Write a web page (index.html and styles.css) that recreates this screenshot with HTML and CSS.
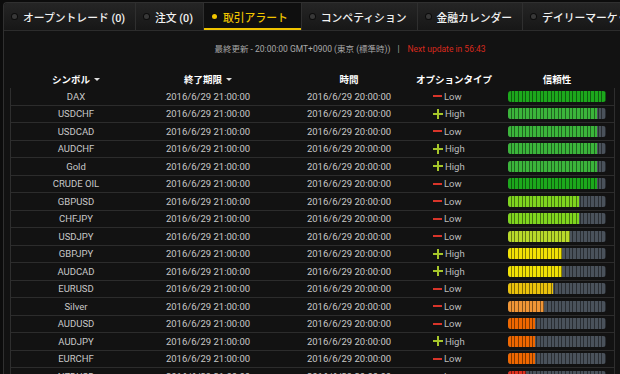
FILE: index.html
```html
<!DOCTYPE html>
<html lang="ja">
<head>
    <meta charset="UTF-8">
    <title>取引アラート</title>
    <link rel="stylesheet" href="styles.css">
</head>
<body>

<div class="frame">
    <!-- Tab bar -->
    <div class="tabs">
        <div class="tab"><span class="dot"></span>オープントレード (0)</div>
        <div class="tab"><span class="dot"></span>注文 (0)</div>
        <div class="tab active"><span class="dot"></span>取引アラート</div>
        <div class="tab"><span class="dot"></span>コンペティション</div>
        <div class="tab"><span class="dot"></span>金融カレンダー</div>
        <div class="tab"><span class="dot"></span>デイリーマーケット</div>
    </div>

    <p class="status">最終更新 - 20:00:00 GMT+0900 (東京 (標準時))<span class="sep">|</span><span class="next">Next update in 56:43</span></p>

    <!-- Table header -->
    <div class="head">
        <div class="hc">シンボル<span class="arrow"></span></div>
        <div class="hc">終了期限<span class="arrow"></span></div>
        <div class="hc">時間</div>
        <div class="hc opt-h">オプションタイプ</div>
        <div class="hc">信頼性</div>
    </div>

    <!-- Alerts -->
    <div class="list">
        <div class="row">
            <div class="c">DAX</div><div class="c">2016/6/29 21:00:00</div><div class="c">2016/6/29 20:00:00</div>
            <div class="opt"><span class="sign minus"></span>Low</div>
            <div class="rel"><div class="bar"><div class="fill green-dark" style="width: 98px"></div></div></div>
        </div>
        <div class="row">
            <div class="c">USDCHF</div><div class="c">2016/6/29 21:00:00</div><div class="c">2016/6/29 20:00:00</div>
            <div class="opt"><span class="sign plus"></span>High</div>
            <div class="rel"><div class="bar"><div class="fill green" style="width: 89px"></div></div></div>
        </div>
        <div class="row">
            <div class="c">USDCAD</div><div class="c">2016/6/29 21:00:00</div><div class="c">2016/6/29 20:00:00</div>
            <div class="opt"><span class="sign minus"></span>Low</div>
            <div class="rel"><div class="bar"><div class="fill green" style="width: 89px"></div></div></div>
        </div>
        <div class="row">
            <div class="c">AUDCHF</div><div class="c">2016/6/29 21:00:00</div><div class="c">2016/6/29 20:00:00</div>
            <div class="opt"><span class="sign plus"></span>High</div>
            <div class="rel"><div class="bar"><div class="fill green" style="width: 89px"></div></div></div>
        </div>
        <div class="row">
            <div class="c">Gold</div><div class="c">2016/6/29 21:00:00</div><div class="c">2016/6/29 20:00:00</div>
            <div class="opt"><span class="sign plus"></span>High</div>
            <div class="rel"><div class="bar"><div class="fill green" style="width: 89px"></div></div></div>
        </div>
        <div class="row">
            <div class="c">CRUDE OIL</div><div class="c">2016/6/29 21:00:00</div><div class="c">2016/6/29 20:00:00</div>
            <div class="opt"><span class="sign minus"></span>Low</div>
            <div class="rel"><div class="bar"><div class="fill green-dark" style="width: 89px"></div></div></div>
        </div>
        <div class="row">
            <div class="c">GBPUSD</div><div class="c">2016/6/29 21:00:00</div><div class="c">2016/6/29 20:00:00</div>
            <div class="opt"><span class="sign minus"></span>Low</div>
            <div class="rel"><div class="bar"><div class="fill lime" style="width: 71px"></div></div></div>
        </div>
        <div class="row">
            <div class="c">CHFJPY</div><div class="c">2016/6/29 21:00:00</div><div class="c">2016/6/29 20:00:00</div>
            <div class="opt"><span class="sign minus"></span>Low</div>
            <div class="rel"><div class="bar"><div class="fill lime" style="width: 71px"></div></div></div>
        </div>
        <div class="row">
            <div class="c">USDJPY</div><div class="c">2016/6/29 21:00:00</div><div class="c">2016/6/29 20:00:00</div>
            <div class="opt"><span class="sign minus"></span>Low</div>
            <div class="rel"><div class="bar"><div class="fill yellow-green" style="width: 62px"></div></div></div>
        </div>
        <div class="row">
            <div class="c">GBPJPY</div><div class="c">2016/6/29 21:00:00</div><div class="c">2016/6/29 20:00:00</div>
            <div class="opt"><span class="sign plus"></span>High</div>
            <div class="rel"><div class="bar"><div class="fill yellow" style="width: 54px"></div></div></div>
        </div>
        <div class="row">
            <div class="c">AUDCAD</div><div class="c">2016/6/29 21:00:00</div><div class="c">2016/6/29 20:00:00</div>
            <div class="opt"><span class="sign plus"></span>High</div>
            <div class="rel"><div class="bar"><div class="fill yellow" style="width: 54px"></div></div></div>
        </div>
        <div class="row">
            <div class="c">EURUSD</div><div class="c">2016/6/29 21:00:00</div><div class="c">2016/6/29 20:00:00</div>
            <div class="opt"><span class="sign minus"></span>Low</div>
            <div class="rel"><div class="bar"><div class="fill gold" style="width: 45px"></div></div></div>
        </div>
        <div class="row">
            <div class="c">Silver</div><div class="c">2016/6/29 21:00:00</div><div class="c">2016/6/29 20:00:00</div>
            <div class="opt"><span class="sign minus"></span>Low</div>
            <div class="rel"><div class="bar"><div class="fill amber" style="width: 36px"></div></div></div>
        </div>
        <div class="row">
            <div class="c">AUDUSD</div><div class="c">2016/6/29 21:00:00</div><div class="c">2016/6/29 20:00:00</div>
            <div class="opt"><span class="sign minus"></span>Low</div>
            <div class="rel"><div class="bar"><div class="fill orange" style="width: 27px"></div></div></div>
        </div>
        <div class="row">
            <div class="c">AUDJPY</div><div class="c">2016/6/29 21:00:00</div><div class="c">2016/6/29 20:00:00</div>
            <div class="opt"><span class="sign plus"></span>High</div>
            <div class="rel"><div class="bar"><div class="fill orange" style="width: 27px"></div></div></div>
        </div>
        <div class="row">
            <div class="c">EURCHF</div><div class="c">2016/6/29 21:00:00</div><div class="c">2016/6/29 20:00:00</div>
            <div class="opt"><span class="sign minus"></span>Low</div>
            <div class="rel"><div class="bar"><div class="fill orange" style="width: 27px"></div></div></div>
        </div>
        <div class="row">
            <div class="c">NZDUSD</div><div class="c">2016/6/29 21:00:00</div><div class="c">2016/6/29 20:00:00</div>
            <div class="opt"><span class="sign minus"></span>Low</div>
            <div class="rel"><div class="bar"><div class="fill red" style="width: 18px"></div></div></div>
        </div>
    </div>
</div>

</body>
</html>
```

FILE: styles.css
```css
* {
    box-sizing: border-box;
}
body {
    margin: 0;
    height: 374px;
    overflow: hidden;
    background-color: #0c0c0c;
    font-family: Roboto, "Noto Sans CJK JP", sans-serif;
    color: #c8c8c8;
}
.frame {
    margin: 2px 0 0 3px;
    height: 372px;
    overflow: hidden;
    background-color: #121212;
    border: 1px solid #303030;
    border-right: none;
    border-bottom: none;
    border-top-left-radius: 4px;
}

/* tabs */
.tabs {
    display: flex;
    height: 28px;
    overflow: hidden;
    white-space: nowrap;
    background: linear-gradient(#252525, #171717);
    border-bottom: 1px solid #2c2c2c;
}
.tab {
    display: flex;
    align-items: center;
    flex-shrink: 0;
    padding: 0 10px 0 8px;
    border-right: 1px solid #2f2f2f;
    font-size: 10.8px;
    font-weight: 500;
    color: #f2f2f2;
}
.dot {
    width: 5px;
    height: 5px;
    margin-right: 6px;
    border-radius: 50%;
    background-color: #383838;
    box-shadow: 0 0 0 1px #0d0d0d;
}
.tab.active {
    background: #0f0f0f;
    color: #f0c400;
    box-shadow: inset 0 -2px #f0c400;
    padding-right: 13px;
}
.tab.active .dot {
    background-color: #f0c400;
}

/* status line */
.status {
    margin: 0;
    height: 25px;
    padding: 12px 0 0 76px;
    line-height: 12px;
    font-size: 8.5px;
    color: #a8a8a8;
    text-align: center;
}
.sep {
    margin: 0 8px 0 7px;
}
.next {
    color: #d7291d;
}

/* table */
.head,
.row {
    display: grid;
    grid-template-columns: 130px 134px 148px 77px 1fr;
    align-items: center;
}
.head {
    height: 18px;
    margin: 14px 5px 0 6px;
    padding: 0 1px;
    font-size: 9.5px;
    font-weight: bold;
    color: #ffffff;
}
.hc {
    display: flex;
    justify-content: center;
    align-items: center;
    white-space: nowrap;
}
.opt-h {
    padding-right: 15px;
}
.arrow {
    margin-left: 4px;
    border-left: 3px solid transparent;
    border-right: 3px solid transparent;
    border-top: 3px solid #dddddd;
}
.list {
    margin: 0 5px 0 6px;
    border-left: 1px solid #2e2e2e;
    border-right: 1px solid #2e2e2e;
}
.row {
    height: 17.5px;
    border-bottom: 1px solid #2c2c2c;
    font-size: 9.5px;
}
.c {
    text-align: center;
    white-space: nowrap;
}
.opt {
    display: flex;
    align-items: center;
    padding-left: 10px;
    color: #bdbdbd;
}
.sign {
    flex-shrink: 0;
    margin-right: 2px;
}
.sign.minus {
    width: 9px;
    height: 2px;
    background-color: #d8352a;
}
.sign.plus {
    width: 10px;
    height: 10px;
    background:
        linear-gradient(#a6c62a, #a6c62a) center / 10px 2px no-repeat,
        linear-gradient(#a6c62a, #a6c62a) center / 2px 10px no-repeat;
}

/* reliability bar */
.rel {
    display: flex;
    justify-content: center;
}
.bar {
    width: 98px;
    height: 11px;
    overflow: hidden;
    border-radius: 3px;
    background:
        repeating-linear-gradient(90deg, transparent 0 2.63px, rgba(0, 0, 0, 0.45) 2.63px 3.63px),
        #4a525b;
}
.fill {
    height: 100%;
    background-image: repeating-linear-gradient(90deg, transparent 0 2.63px, rgba(0, 0, 0, 0.45) 2.63px 3.63px);
}
.green-dark { background-color: #1ca81c; }
.green { background-color: #3bb53b; }
.lime { background-color: #7fd51f; }
.yellow-green { background-color: #b9da2a; }
.yellow { background-color: #f2e205; }
.gold { background-color: #eac20c; }
.amber { background-color: #f19636; }
.orange { background-color: #ef6700; }
.red { background-color: #e0301f; }
```
